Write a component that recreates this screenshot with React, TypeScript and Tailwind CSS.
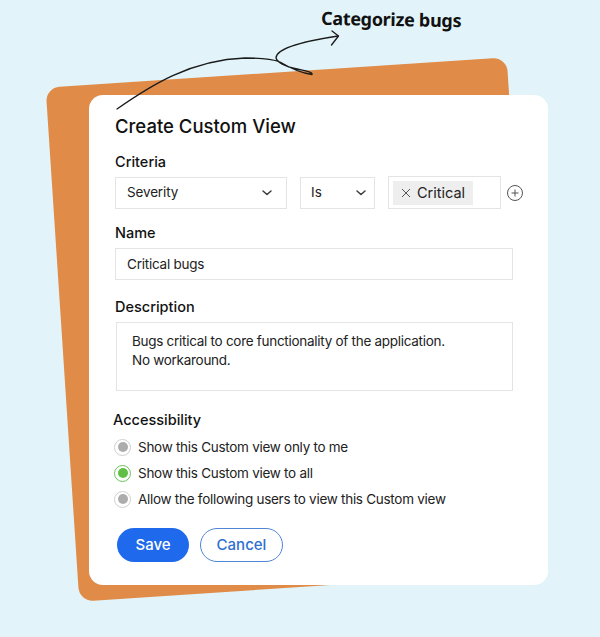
const font = { fontFamily: "Inter, 'Noto Sans', sans-serif" };

function Chevron() {
  return (
    <svg width="12" height="8" viewBox="0 0 12 8" fill="none" stroke="#3a3a3a" strokeWidth="1.5" strokeLinecap="round" strokeLinejoin="round">
      <path d="M2 2l4 3.500L10 2" />
    </svg>
  );
}

function Radio({ active, label }: { active?: boolean; label: string }) {
  return (
    <div className="flex items-center gap-[7px] h-[26px]">
      <span className={`flex h-[17px] w-[17px] items-center justify-center rounded-full border-[1.5px] bg-white ${active ? "border-[#6cc25a]" : "border-[#cfcfcf]"}`}>
        <span className={`h-[10px] w-[10px] rounded-full ${active ? "bg-[#5fbf47]" : "bg-[#acacac]"}`} />
      </span>
      <span className="text-[13.5px] tracking-[-0.28px] text-[#222]">{label}</span>
    </div>
  );
}

export default function App() {
  return (
    <div className="relative h-[637px] w-[600px] overflow-hidden bg-[#e2f4fa] pt-[95px] pl-[89px]" style={font}>
      <div className="absolute left-[61.5px] top-[71.5px] h-[515px] w-[462px] -rotate-[3.75deg] rounded-[14px] bg-[#e08b47]" />

      <div className="absolute left-[321px] top-[6px] rotate-1 text-[18px] font-bold tracking-[-0.3px] text-[#111]" style={{ fontFamily: "'Noto Sans', sans-serif" }}>
        Categorize bugs
      </div>

      <div className="relative h-[490px] w-[459px] rounded-[14px] bg-white pt-[19px]">
        <h1 className="pl-[26px] text-[18.5px] font-medium leading-[24px] text-[#111]">Create Custom View</h1>

        <div className="mt-[14px] pl-[26px] text-[14.5px] font-medium leading-[20px] text-[#111]">Criteria</div>
        <div className="mt-[4px] flex items-center pl-[26px]">
          <div className="flex h-[32px] w-[172px] items-center justify-between border border-[#e4e4e4] pr-[13px] pl-[11px] text-[13.5px] tracking-[-0.15px] text-[#222]">
            Severity <Chevron />
          </div>
          <div className="ml-[13px] flex h-[32px] w-[75px] items-center justify-between border border-[#e4e4e4] pr-[7px] pl-[10px] text-[13.5px] text-[#222]">
            Is <Chevron />
          </div>
          <div className="ml-[13px] flex h-[33px] w-[113px] items-center border border-[#e4e4e4] pl-[4px]">
            <span className="flex h-[24px] w-[80px] items-center gap-[6px] bg-[#eeeeee] pl-[8px] text-[14.5px] text-[#222]">
              <svg width="10" height="10" viewBox="0 0 10 10" stroke="#555" strokeWidth="1" fill="none"><path d="M1 1l8 8M9 1 1 9" /></svg>
              Critical
            </span>
          </div>
          <svg className="ml-[5px]" width="18" height="18" viewBox="0 0 18 18" fill="none" stroke="#555" strokeWidth="1"><circle cx="9" cy="9" r="7.5" /><path d="M9 5.5v7M5.5 9h7" /></svg>
        </div>

        <div className="mt-[14px] pl-[26px] text-[14.5px] font-medium leading-[20px] text-[#111]">Name</div>
        <div className="ml-[26px] mt-[5px] flex h-[32px] w-[398px] items-center border border-[#e4e4e4] pl-[11px] text-[13.5px] tracking-[-0.23px] text-[#222]">Critical bugs</div>

        <div className="mt-[17px] pl-[26px] text-[14.5px] font-medium leading-[20px] text-[#111]">Description</div>
        <div className="ml-[27px] mt-[5px] h-[69px] w-[397px] border border-[#e4e4e4] pl-[15px] pt-[9px] text-[13.5px] leading-[18.5px] tracking-[-0.28px] text-[#222]">
          Bugs critical to core functionality of the application.<br />No workaround.
        </div>

        <div className="mt-[19px] pl-[24px] text-[14.5px] font-medium leading-[20px] text-[#111]">Accessibility</div>
        <div className="mt-[4px] pl-[25px]">
          <Radio label="Show this Custom view only to me" />
          <Radio active label="Show this Custom view to all" />
          <Radio label="Allow the following users to view this Custom view" />
        </div>

        <div className="mt-[16px] flex gap-[11px] pl-[28px]">
          <button className="h-[34px] w-[72px] rounded-full bg-[#1f6aec] text-[15px] font-medium text-white">Save</button>
          <button className="h-[34px] w-[83px] rounded-full border border-[#4f86d8] bg-white text-[15px] font-medium text-[#2f6fd0]">Cancel</button>
        </div>
      </div>

      <svg className="absolute left-0 top-0 pointer-events-none" width="600" height="637" fill="none" stroke="#1a1a1a" strokeWidth="1.3" strokeLinecap="round" strokeLinejoin="round">
        <path d="M117 109C150 86 190 60 245 58C262 58 272 59 280 62C290 68 300 73 312 74.500C313 72 305 71 297 69C288 67 278 64 276 58C276 48 305 41 338 36" />
        <path d="M332 31l6.500 5-7 9" />
      </svg>
    </div>
  );
}
